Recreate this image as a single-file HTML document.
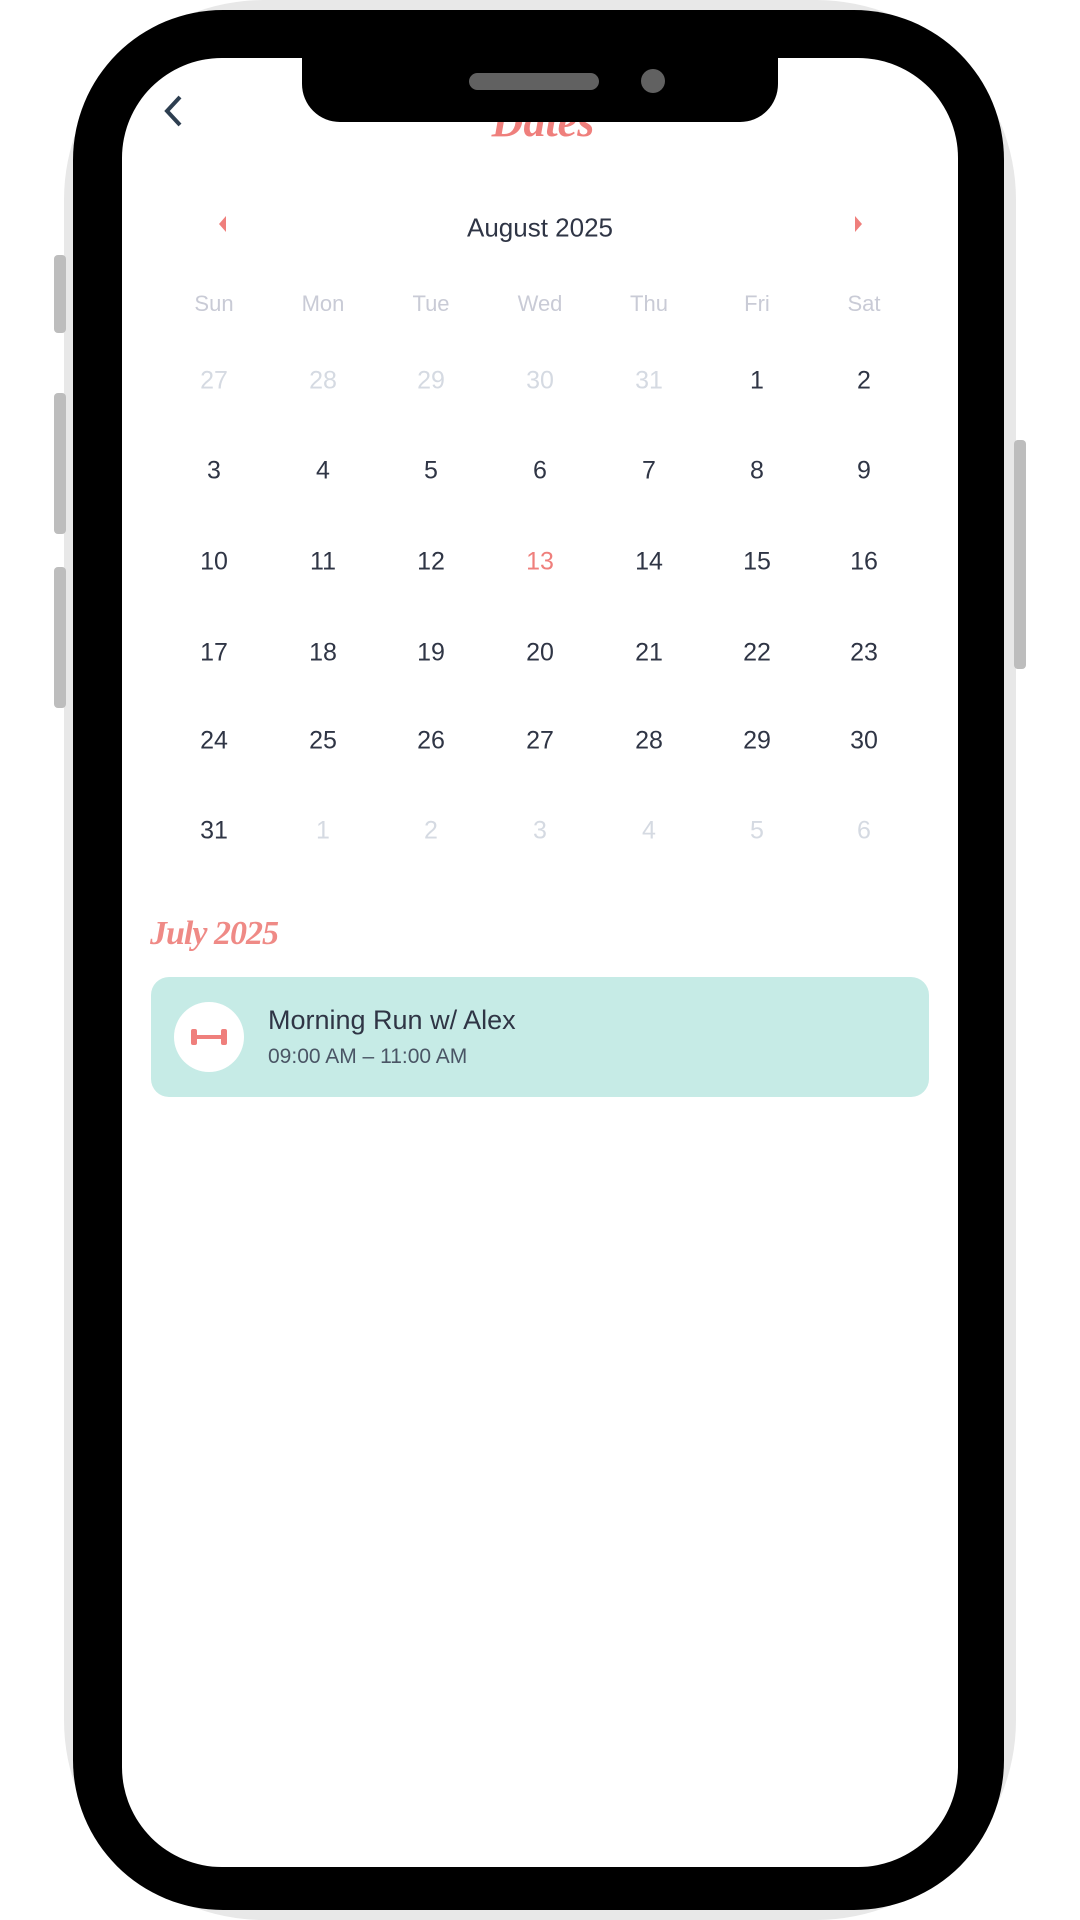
<!DOCTYPE html>
<html><head><meta charset="utf-8"><style>
html,body{margin:0;padding:0;width:1080px;height:1920px;background:#fff;overflow:hidden;position:relative;font-family:"Liberation Sans",sans-serif}
.a{position:absolute}
.t{position:absolute;transform:translate(-50%,-50%);white-space:nowrap}
.h{color:#c9cbd6;font-size:22px}
.d{color:#2f3545;font-size:25px}
.g{color:#d5dae2;font-size:25px}
</style></head><body>
<div class="a" style="left:64px;top:0;width:952px;height:1920px;background:#e8e8e8;border-radius:200px"></div>
<div class="a" style="left:54px;top:255px;width:12px;height:78px;background:#bdbdbd;border-radius:4px"></div>
<div class="a" style="left:54px;top:393px;width:12px;height:141px;background:#bdbdbd;border-radius:4px"></div>
<div class="a" style="left:54px;top:567px;width:12px;height:141px;background:#bdbdbd;border-radius:4px"></div>
<div class="a" style="left:1014px;top:440px;width:12px;height:229px;background:#bdbdbd;border-radius:4px"></div>
<div class="a" style="left:73px;top:10px;width:931px;height:1900px;background:#000;border-radius:150px"></div>
<div class="a" style="left:122px;top:58px;width:836px;height:1809px;background:#fff;border-radius:100px"></div>
<div class="a" style="left:478px;top:122px;width:130px;height:16px;overflow:hidden"><div style="font:italic bold 44px 'Liberation Serif',serif;color:#ef7f7c;margin-top:-26px;text-align:center">Dates</div></div>
<div class="a" style="left:302px;top:50px;width:476px;height:72px;background:#000;border-radius:0 0 38px 38px"></div>
<div class="a" style="left:469px;top:73px;width:130px;height:17px;background:#616161;border-radius:9px"></div>
<div class="a" style="left:641px;top:69px;width:24px;height:24px;background:#616161;border-radius:50%"></div>
<svg class="a" style="left:160px;top:92px" width="30" height="38"><path d="M20 5 L7 19 L20 33" fill="none" stroke="#2d3e50" stroke-width="4"/></svg>
<svg class="a" style="left:216px;top:213px" width="14" height="22"><path d="M10 3 L3 11 L10 19Z" fill="#ef7f7c"/></svg>
<svg class="a" style="left:851px;top:213px" width="14" height="22"><path d="M4 3 L11 11 L4 19Z" fill="#ef7f7c"/></svg>
<div class="t" style="left:540px;top:228px;font-size:26px;color:#2f3545">August 2025</div>
<div class="t h" style="left:214px;top:304px">Sun</div><div class="t h" style="left:323px;top:304px">Mon</div><div class="t h" style="left:431px;top:304px">Tue</div><div class="t h" style="left:540px;top:304px">Wed</div><div class="t h" style="left:649px;top:304px">Thu</div><div class="t h" style="left:757px;top:304px">Fri</div><div class="t h" style="left:864px;top:304px">Sat</div>
<div class="t g" style="left:214px;top:381px">27</div><div class="t g" style="left:323px;top:381px">28</div><div class="t g" style="left:431px;top:381px">29</div><div class="t g" style="left:540px;top:381px">30</div><div class="t g" style="left:649px;top:381px">31</div><div class="t d" style="left:757px;top:381px">1</div><div class="t d" style="left:864px;top:381px">2</div>
<div class="t d" style="left:214px;top:471px">3</div><div class="t d" style="left:323px;top:471px">4</div><div class="t d" style="left:431px;top:471px">5</div><div class="t d" style="left:540px;top:471px">6</div><div class="t d" style="left:649px;top:471px">7</div><div class="t d" style="left:757px;top:471px">8</div><div class="t d" style="left:864px;top:471px">9</div>
<div class="t d" style="left:214px;top:562px">10</div><div class="t d" style="left:323px;top:562px">11</div><div class="t d" style="left:431px;top:562px">12</div><div class="t d" style="left:540px;top:562px;color:#ef7f7c">13</div><div class="t d" style="left:649px;top:562px">14</div><div class="t d" style="left:757px;top:562px">15</div><div class="t d" style="left:864px;top:562px">16</div>
<div class="t d" style="left:214px;top:653px">17</div><div class="t d" style="left:323px;top:653px">18</div><div class="t d" style="left:431px;top:653px">19</div><div class="t d" style="left:540px;top:653px">20</div><div class="t d" style="left:649px;top:653px">21</div><div class="t d" style="left:757px;top:653px">22</div><div class="t d" style="left:864px;top:653px">23</div>
<div class="t d" style="left:214px;top:741px">24</div><div class="t d" style="left:323px;top:741px">25</div><div class="t d" style="left:431px;top:741px">26</div><div class="t d" style="left:540px;top:741px">27</div><div class="t d" style="left:649px;top:741px">28</div><div class="t d" style="left:757px;top:741px">29</div><div class="t d" style="left:864px;top:741px">30</div>
<div class="t d" style="left:214px;top:831px">31</div><div class="t g" style="left:323px;top:831px">1</div><div class="t g" style="left:431px;top:831px">2</div><div class="t g" style="left:540px;top:831px">3</div><div class="t g" style="left:649px;top:831px">4</div><div class="t g" style="left:757px;top:831px">5</div><div class="t g" style="left:864px;top:831px">6</div>
<div class="a" style="left:150px;top:915px;font:italic bold 34px 'Liberation Serif',serif;color:#ef8a86;letter-spacing:-1px">July 2025</div>
<div class="a" style="left:151px;top:977px;width:778px;height:120px;background:#c6ebe6;border-radius:18px"></div>
<div class="a" style="left:174px;top:1002px;width:70px;height:70px;background:#fff;border-radius:50%"></div>
<svg class="a" style="left:189px;top:1024px" width="40" height="26"><rect x="2" y="5" width="6" height="16" rx="2" fill="#ef7f7c"/><rect x="32" y="5" width="6" height="16" rx="2" fill="#ef7f7c"/><rect x="7" y="11" width="26" height="4" fill="#ef7f7c"/></svg>
<div class="a" style="left:268px;top:1005px;font-size:27px;color:#2f3545">Morning Run w/ Alex</div>
<div class="a" style="left:268px;top:1045px;font-size:21px;color:#4a5565">09:00 AM – 11:00 AM</div>
</body></html>
